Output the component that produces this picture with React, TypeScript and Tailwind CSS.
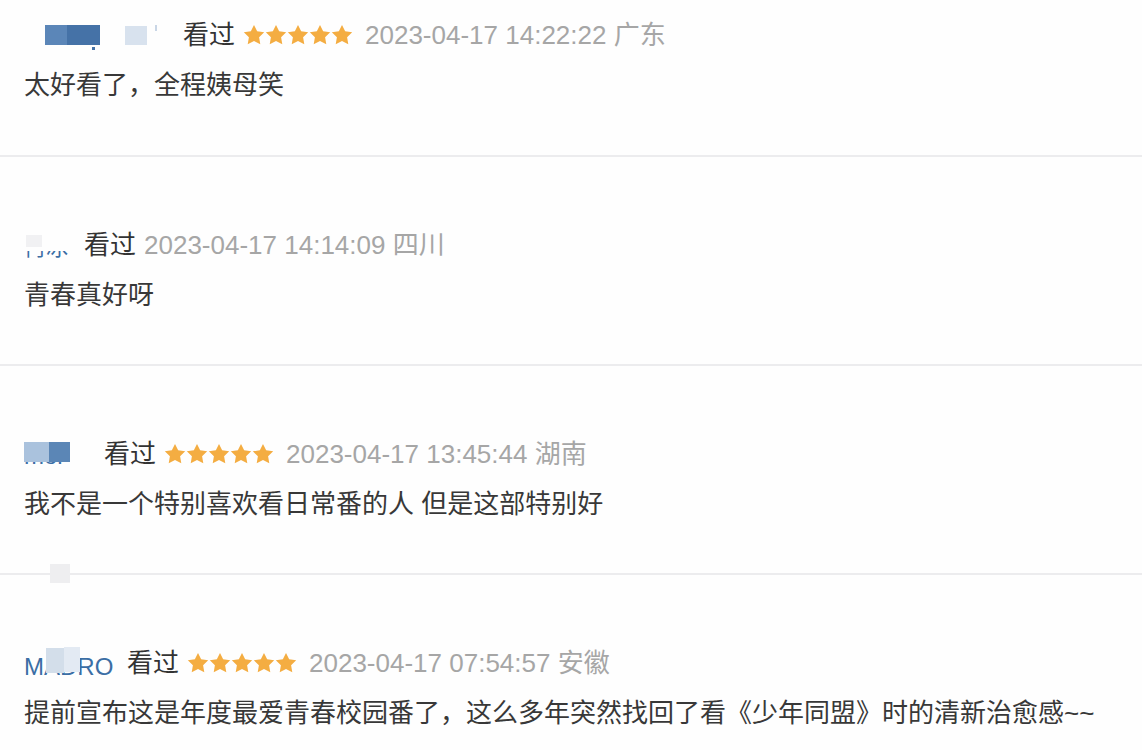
import React from 'react';

type Review = {
  nameWidth: number;
  stars: boolean;
  time: string;
  region: string;
  text: string;
  name: React.ReactNode;
};

const Star = () => (
  <svg width="22" height="22" viewBox="1.2 1.4 21.6 21" className="block">
    <path
      d="M12 2l3.09 6.26L22 9.27l-5 4.87 1.18 6.88L12 17.77l-6.18 3.25L7 14.14 2 9.27l6.91-1.01z"
      fill="#f4ad42"
    />
  </svg>
);

// blurred user names from the screenshot, drawn as mosaic blocks
const reviews: Review[] = [
  {
    nameWidth: 150,
    stars: true,
    time: '2023-04-17 14:22:22',
    region: '广东',
    text: '太好看了，全程姨母笑',
    name: (
      <div className="flex items-start pt-[8px] pl-[21px]">
        <span className="w-[22px] h-[20px] bg-[#5b86b8]" />
        <span className="w-[33px] h-[20px] bg-[#4572a7]" />
        <span className="w-[3px] h-[3px] mt-[22px] -ml-[8px] bg-[#4572a7]" />
        <span className="w-[30px]" />
        <span className="w-[22px] h-[19px] mt-[1px] bg-[#d8e2ee]" />
        <span className="w-[2px] h-[6px] ml-[8px] bg-[#c9d6e6]" />
      </div>
    ),
  },
  {
    nameWidth: 51,
    stars: false,
    time: '2023-04-17 14:14:09',
    region: '四川',
    text: '青春真好呀',
    name: (
      <div className="flex flex-col pt-[8px]">
        <span className="w-[16px] h-[12px] ml-[2px] bg-[#f1f1f3]" />
        <div className="h-[10px] mt-[4px] overflow-hidden">
          <div className="-mt-[16px] text-[22px] leading-[26px] text-[#3b6ea5] whitespace-nowrap">冉冰</div>
        </div>
      </div>
    ),
  },
  {
    nameWidth: 71,
    stars: true,
    time: '2023-04-17 13:45:44',
    region: '湖南',
    text: '我不是一个特别喜欢看日常番的人 但是这部特别好',
    name: (
      <div className="flex flex-col pt-[6px]">
        <div className="flex">
          <span className="w-[25px] h-[20px] bg-[#aac2dd]" />
          <span className="w-[21px] h-[20px] bg-[#5b86b6]" />
        </div>
        <div className="h-[6px] w-[48px] overflow-hidden">
          <div className="-mt-[18px] text-[24px] leading-[24px] text-[#3b6ea5]">mol</div>
        </div>
      </div>
    ),
  },
  {
    nameWidth: 94,
    stars: true,
    time: '2023-04-17 07:54:57',
    region: '安徽',
    text: '提前宣布这是年度最爱青春校园番了，这么多年突然找回了看《少年同盟》时的清新治愈感~~',
    name: (
      <div className="relative h-[36px]">
        <div className="h-[36px] overflow-hidden pt-[17px]">
          <div className="-mt-[7px] text-[24px] leading-[24px] text-[#3b6ea5] whitespace-nowrap">MADRO</div>
        </div>
        <div className="absolute left-[22px] top-[2px] flex">
          <span className="w-[18px] h-[25px] mt-[1px] bg-[#d3deea]" />
          <span className="w-[16px] h-[25px] bg-[#e3eaf3]" />
        </div>
      </div>
    ),
  },
];

const App: React.FC = () => {
  return (
    <div
      className="w-[1142px] h-[750px] overflow-hidden bg-[#fefefe]"
      style={{ fontFamily: '"Liberation Sans", "Noto Sans CJK SC", sans-serif' }}
    >
      {reviews.map((r, i) => (
        <div
          key={i}
          className={`relative px-[24px] border-b-2 border-[#ececee] ${
            i === 0 ? 'pt-[17px] pb-[52px]' : 'pt-[70px] pb-[51px]'
          }`}
        >
          {i === 3 && (
            <span className="absolute left-[50px] top-[-11px] w-[20px] h-[19px] bg-[#eeeef0]" />
          )}
          <div className="flex items-center h-[36px] text-[26px] leading-[36px]">
            <div className="h-[36px] shrink-0" style={{ width: r.nameWidth }}>
              {r.name}
            </div>
            <span className="ml-[9px] text-[#333333]">看过</span>
            {r.stars && (
              <span className="ml-[8px] flex items-center">
                {[...Array(5)].map((_, k) => (
                  <Star key={k} />
                ))}
              </span>
            )}
            <span className={`${r.stars ? 'ml-[12px]' : 'ml-[8px]'} text-[#a6a6a6] whitespace-nowrap`}>
              {r.time} {r.region}
            </span>
          </div>
          <p className="mt-[14px] h-[36px] text-[26px] leading-[36px] text-[#383838] whitespace-nowrap">
            {r.text}
          </p>
        </div>
      ))}
    </div>
  );
};

export default App;
